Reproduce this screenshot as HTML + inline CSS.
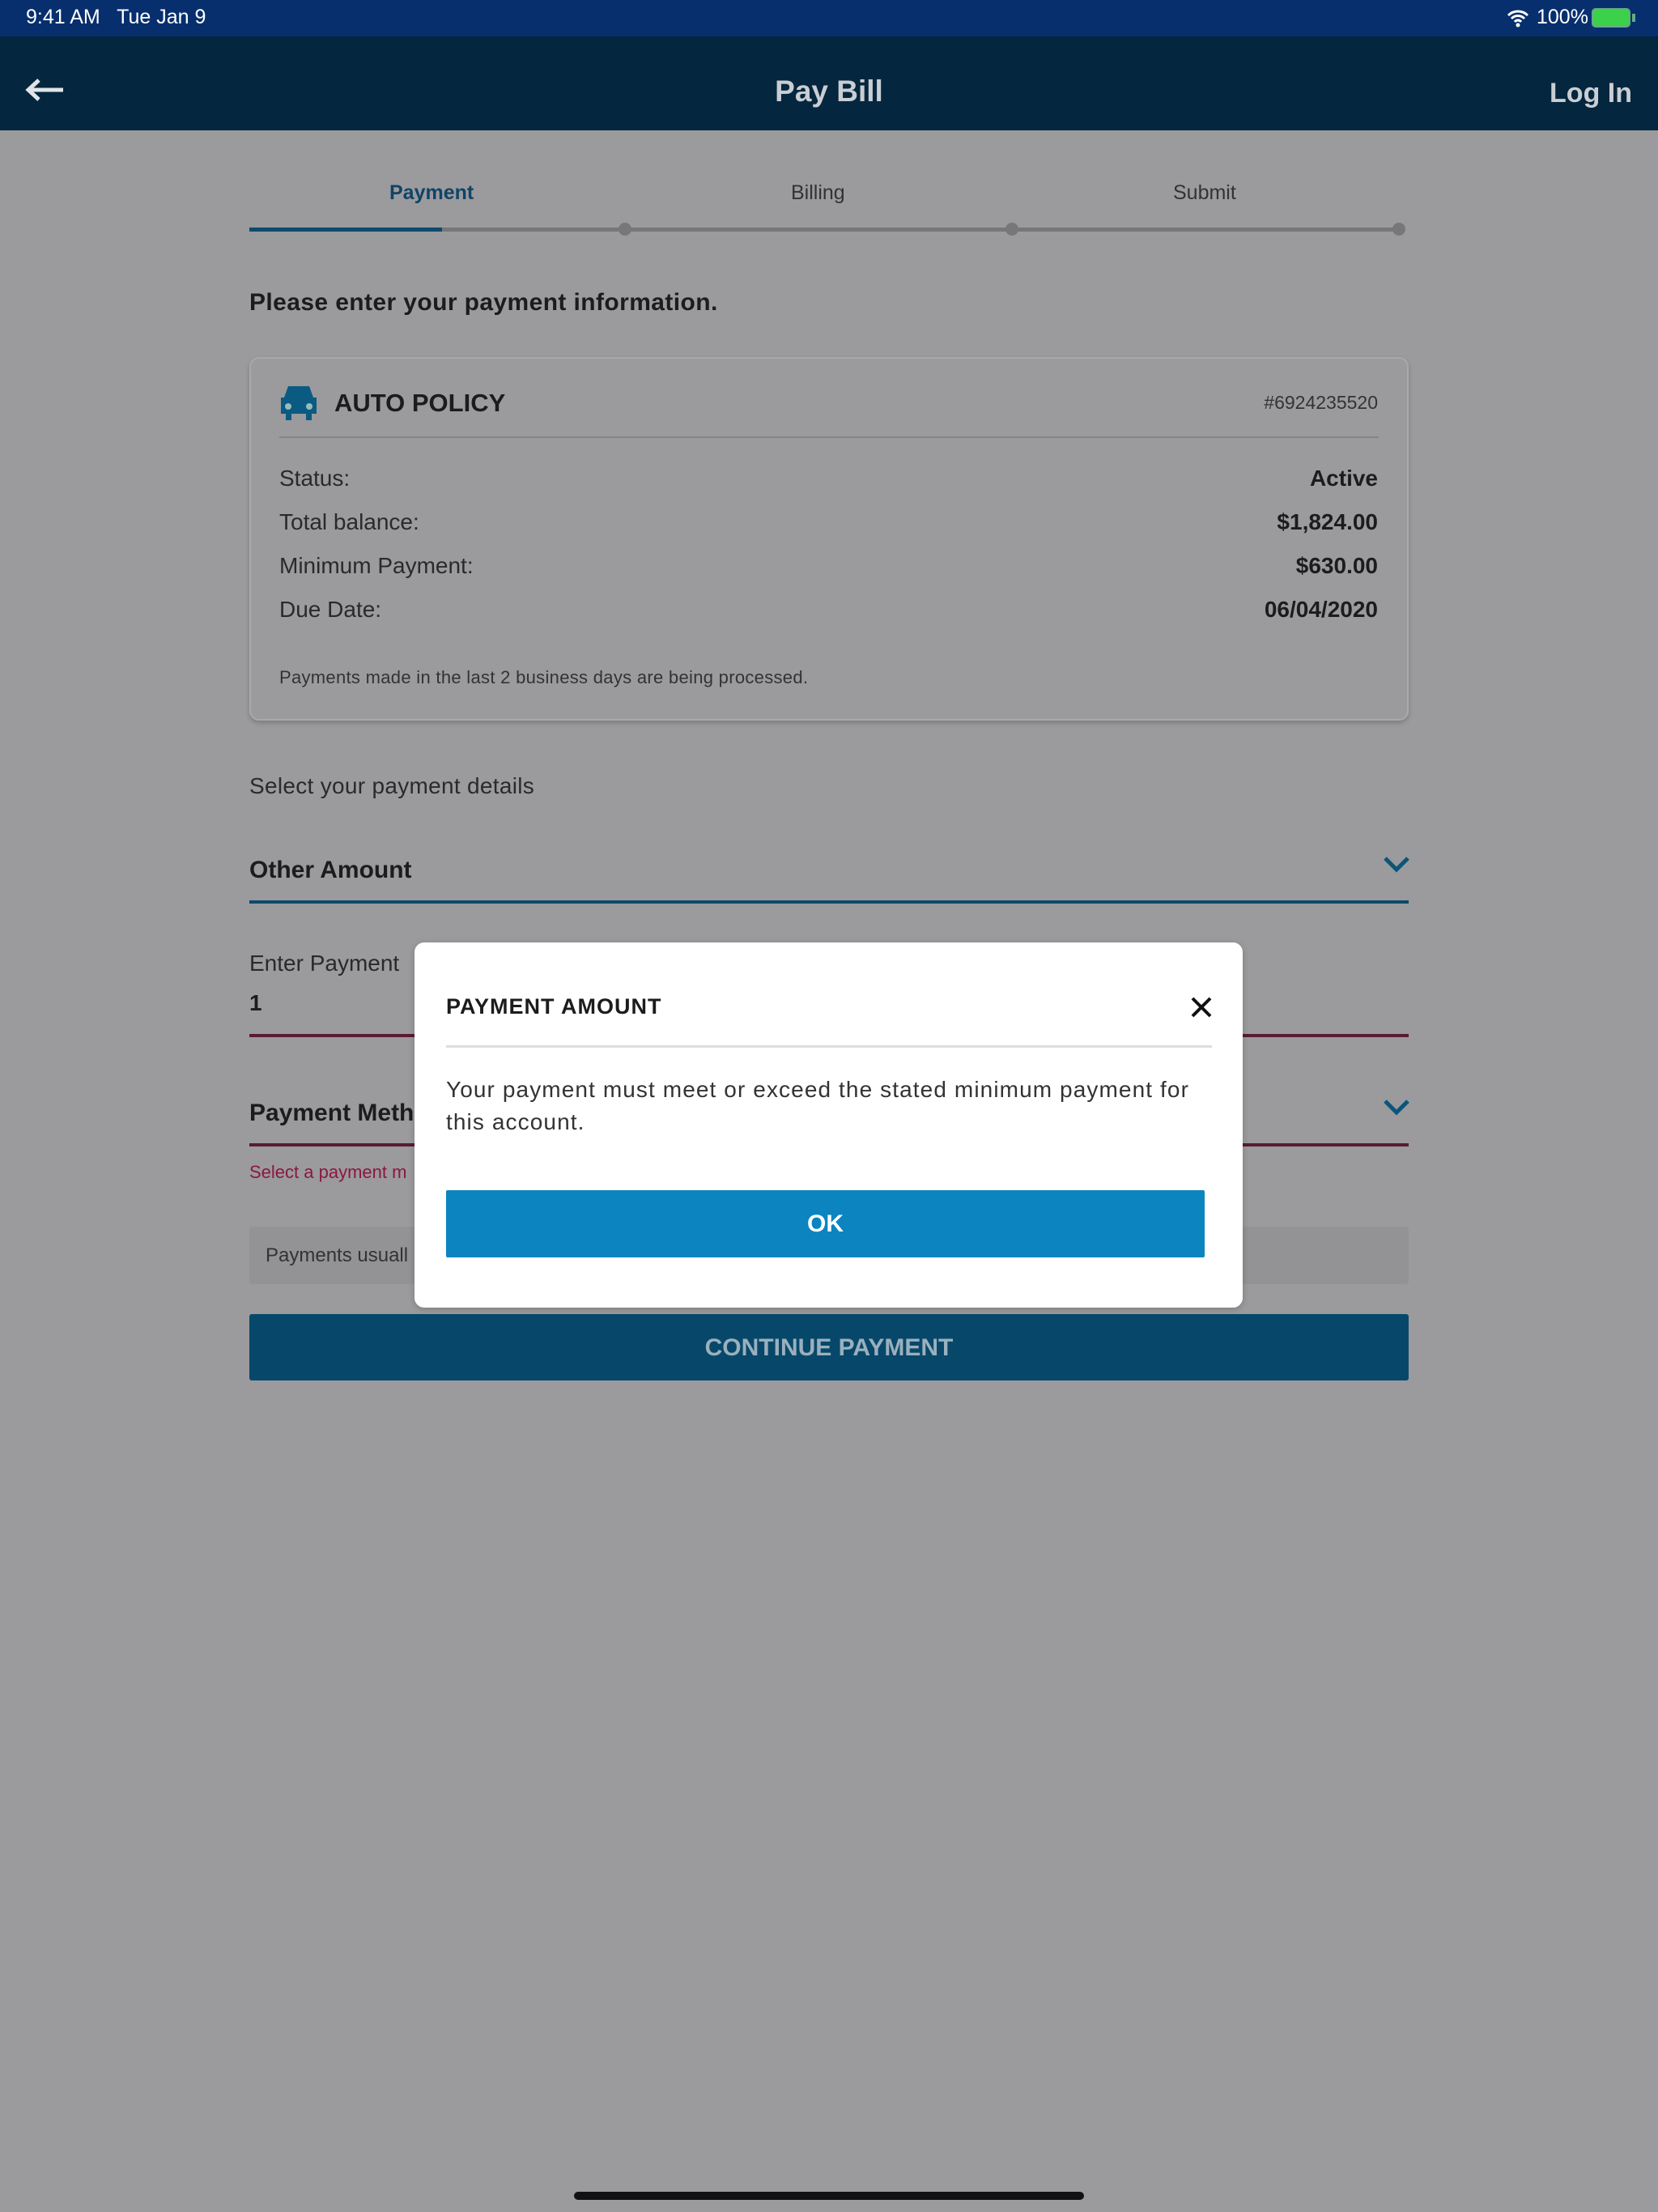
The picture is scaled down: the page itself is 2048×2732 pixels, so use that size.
<!DOCTYPE html>
<html><head><meta charset="utf-8"><style>
*{margin:0;padding:0;box-sizing:border-box}
body{width:2048px;height:2732px;background:#9b9a9d;font-family:"Liberation Sans",sans-serif;position:relative;overflow:hidden;color:#1c1c1e}
.a{position:absolute;white-space:nowrap}
.sb{left:0;top:0;width:2048px;height:45px;background:#072f6e}
.hd{left:0;top:45px;width:2048px;height:116px;background:#04263e}
.r{right:346px}
</style></head><body>
<div class="a sb"></div>
<div class="a" style="left:32px;top:7px;color:#fff;font-size:25px">9:41 AM&nbsp;&nbsp; Tue Jan 9</div>
<div class="a" style="left:1898px;top:7px;color:#fff;font-size:25px">100%</div>
<svg class="a" style="left:1860px;top:10px" width="30" height="24" viewBox="0 0 30 24"><path d="M3 9a17 17 0 0 1 24 0M7 13a11 11 0 0 1 16 0M11 17a5 5 0 0 1 8 0" stroke="#fff" stroke-width="3" fill="none"/><circle cx="15" cy="21" r="2.5" fill="#fff"/></svg>
<div class="a" style="left:1966px;top:10px;width:48px;height:24px;border:2px solid #6a8;border-radius:5px;background:#3bd14b"></div>
<div class="a" style="left:2016px;top:17px;width:4px;height:10px;background:#6a8"></div>
<div class="a hd"></div>
<svg class="a" style="left:30px;top:96px" width="50" height="30" viewBox="0 0 50 30"><path d="M48 15H6M18 3L5 15l13 12" stroke="#e0e4e8" stroke-width="5" fill="none"/></svg>
<div class="a" style="left:0;width:2048px;text-align:center;top:92px;color:#c9ced3;font-size:37px;font-weight:bold">Pay Bill</div>
<div class="a" style="right:32px;top:96px;color:#c9ced3;font-size:34px;font-weight:bold">Log In</div>

<div class="a" style="left:481px;top:224px;color:#0f4466;font-size:25px;font-weight:bold">Payment</div>
<div class="a" style="left:977px;top:224px;color:#333;font-size:25px">Billing</div>
<div class="a" style="left:1449px;top:224px;color:#333;font-size:25px">Submit</div>
<div class="a" style="left:308px;top:281px;width:1420px;height:5px;background:#777"></div>
<div class="a" style="left:308px;top:281px;width:238px;height:5px;background:#0d4a70"></div>
<div class="a" style="left:764px;top:275px;width:16px;height:16px;border-radius:50%;background:#777"></div>
<div class="a" style="left:1242px;top:275px;width:16px;height:16px;border-radius:50%;background:#777"></div>
<div class="a" style="left:1720px;top:275px;width:16px;height:16px;border-radius:50%;background:#777"></div>

<div class="a" style="left:308px;top:357px;font-size:30px;font-weight:bold;letter-spacing:0.4px">Please enter your payment information.</div>

<div class="a" style="left:308px;top:441px;width:1432px;height:449px;border:2px solid #a9a8ab;border-radius:12px;box-shadow:0 3px 6px rgba(0,0,0,.2)"></div>
<svg class="a" style="left:345px;top:475px" width="48" height="45" viewBox="0 0 48 45"><path d="M11 2h26l5 14h4v20h-6v8h-7v-8H15v8H8v-8H2V16h4z" fill="#0b5a82"/><circle cx="11" cy="27" r="4" fill="#9bb"/><circle cx="37" cy="27" r="4" fill="#9bb"/></svg>
<div class="a" style="left:413px;top:480px;font-size:31px;font-weight:bold">AUTO POLICY</div>
<div class="a r" style="top:484px;font-size:23px;color:#333">#6924235520</div>
<div class="a" style="left:345px;top:539px;width:1358px;height:2px;background:#858487"></div>
<div class="a" style="left:345px;top:575px;font-size:28px;color:#2a2a2a">Status:</div>
<div class="a r" style="top:575px;font-size:28px;font-weight:bold">Active</div>
<div class="a" style="left:345px;top:629px;font-size:28px;color:#2a2a2a">Total balance:</div>
<div class="a r" style="top:629px;font-size:28px;font-weight:bold">$1,824.00</div>
<div class="a" style="left:345px;top:683px;font-size:28px;color:#2a2a2a">Minimum Payment:</div>
<div class="a r" style="top:683px;font-size:28px;font-weight:bold">$630.00</div>
<div class="a" style="left:345px;top:737px;font-size:28px;color:#2a2a2a">Due Date:</div>
<div class="a r" style="top:737px;font-size:28px;font-weight:bold">06/04/2020</div>
<div class="a" style="left:345px;top:824px;font-size:22px;color:#333;letter-spacing:0.3px">Payments made in the last 2 business days are being processed.</div>

<div class="a" style="left:308px;top:955px;font-size:28px;color:#2a2a2a;letter-spacing:0.3px">Select your payment details</div>
<div class="a" style="left:308px;top:1058px;font-size:30px;font-weight:bold">Other Amount</div>
<svg class="a" style="left:1708px;top:1056px" width="34" height="24" viewBox="0 0 34 24"><path d="M3 4l14 14L31 4" stroke="#0b5578" stroke-width="5" fill="none"/></svg>
<div class="a" style="left:308px;top:1112px;width:1432px;height:4px;background:#0d4a6c"></div>
<div class="a" style="left:308px;top:1174px;font-size:28px;color:#2a2a2a">Enter Payment</div>
<div class="a" style="left:308px;top:1223px;font-size:28px;font-weight:bold">1</div>
<div class="a" style="left:308px;top:1277px;width:1432px;height:4px;background:#5a1b34"></div>
<div class="a" style="left:308px;top:1358px;font-size:30px;font-weight:bold">Payment Meth</div>
<svg class="a" style="left:1708px;top:1356px" width="34" height="24" viewBox="0 0 34 24"><path d="M3 4l14 14L31 4" stroke="#0b5578" stroke-width="5" fill="none"/></svg>
<div class="a" style="left:308px;top:1412px;width:1432px;height:4px;background:#5a1b34"></div>
<div class="a" style="left:308px;top:1435px;font-size:22px;color:#8a1840">Select a payment m</div>
<div class="a" style="left:308px;top:1515px;width:1432px;height:71px;background:#939295;border-radius:4px"></div>
<div class="a" style="left:328px;top:1537px;font-size:24px;color:#333">Payments usuall</div>
<div class="a" style="left:308px;top:1623px;width:1432px;height:82px;background:#07486a;border-radius:3px"></div>
<div class="a" style="left:308px;width:1432px;text-align:center;top:1648px;font-size:30px;font-weight:bold;color:#9ab0bd">CONTINUE PAYMENT</div>

<div class="a" style="left:512px;top:1164px;width:1023px;height:451px;background:#fff;border-radius:12px;box-shadow:0 2px 8px rgba(0,0,0,.2)"></div>
<div class="a" style="left:551px;top:1228px;font-size:27px;font-weight:bold;letter-spacing:1px">PAYMENT AMOUNT</div>
<svg class="a" style="left:1470px;top:1230px" width="28" height="28" viewBox="0 0 28 28"><path d="M3 3l22 22M25 3L3 25" stroke="#111" stroke-width="4"/></svg>
<div class="a" style="left:551px;top:1291px;width:946px;height:3px;background:#ddd"></div>
<div class="a" style="left:551px;top:1326px;font-size:28px;color:#333;line-height:40px;letter-spacing:1.1px">Your payment must meet or exceed the stated minimum payment for<br>this account.</div>
<div class="a" style="left:551px;top:1470px;width:937px;height:83px;background:#0b84c0;border-radius:2px"></div>
<div class="a" style="left:551px;width:937px;text-align:center;top:1495px;font-size:30px;font-weight:bold;color:#fff">OK</div>

<div class="a" style="left:709px;top:2707px;width:630px;height:10px;border-radius:5px;background:#111"></div>
</body></html>
